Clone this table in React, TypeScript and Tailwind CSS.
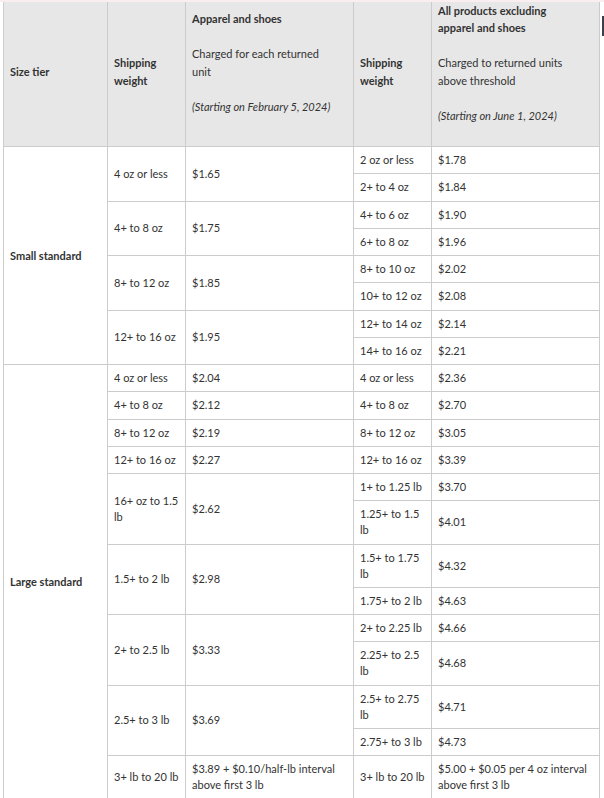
import React from 'react';

type Cell = { text: string; span?: number };
type Row = { left?: [Cell, Cell]; right: [string, string] };

const small: Row[] = [
  { left: [{ text: '4 oz or less', span: 2 }, { text: '$1.65', span: 2 }], right: ['2 oz or less', '$1.78'] },
  { right: ['2+ to 4 oz', '$1.84'] },
  { left: [{ text: '4+ to 8 oz', span: 2 }, { text: '$1.75', span: 2 }], right: ['4+ to 6 oz', '$1.90'] },
  { right: ['6+ to 8 oz', '$1.96'] },
  { left: [{ text: '8+ to 12 oz', span: 2 }, { text: '$1.85', span: 2 }], right: ['8+ to 10 oz', '$2.02'] },
  { right: ['10+ to 12 oz', '$2.08'] },
  { left: [{ text: '12+ to 16 oz', span: 2 }, { text: '$1.95', span: 2 }], right: ['12+ to 14 oz', '$2.14'] },
  { right: ['14+ to 16 oz', '$2.21'] },
];

const large: Row[] = [
  { left: [{ text: '4 oz or less' }, { text: '$2.04' }], right: ['4 oz or less', '$2.36'] },
  { left: [{ text: '4+ to 8 oz' }, { text: '$2.12' }], right: ['4+ to 8 oz', '$2.70'] },
  { left: [{ text: '8+ to 12 oz' }, { text: '$2.19' }], right: ['8+ to 12 oz', '$3.05'] },
  { left: [{ text: '12+ to 16 oz' }, { text: '$2.27' }], right: ['12+ to 16 oz', '$3.39'] },
  { left: [{ text: '16+ oz to 1.5\nlb', span: 2 }, { text: '$2.62', span: 2 }], right: ['1+ to 1.25 lb', '$3.70'] },
  { right: ['1.25+ to 1.5\nlb', '$4.01'] },
  { left: [{ text: '1.5+ to 2 lb', span: 2 }, { text: '$2.98', span: 2 }], right: ['1.5+ to 1.75\nlb', '$4.32'] },
  { right: ['1.75+ to 2 lb', '$4.63'] },
  { left: [{ text: '2+ to 2.5 lb', span: 2 }, { text: '$3.33', span: 2 }], right: ['2+ to 2.25 lb', '$4.66'] },
  { right: ['2.25+ to 2.5\nlb', '$4.68'] },
  { left: [{ text: '2.5+ to 3 lb', span: 2 }, { text: '$3.69', span: 2 }], right: ['2.5+ to 2.75\nlb', '$4.71'] },
  { right: ['2.75+ to 3 lb', '$4.73'] },
  {
    left: [{ text: '3+ lb to 20 lb' }, { text: '$3.89 + $0.10/half-lb interval above first 3 lb' }],
    right: ['3+ lb to 20 lb', '$5.00 + $0.05 per 4 oz interval above first 3 lb'],
  },
];

const td = 'border border-[#cccccc] px-[6px] py-[5.125px] align-middle leading-[16px]';
const th = 'border border-[#cccccc] bg-[#e7e7e7] px-[6px] py-[4.5px] align-middle text-left leading-[17.5px]';

function Section({ tier, rows }: { tier: string; rows: Row[] }) {
  return (
    <>
      {rows.map((r, i) => (
        <tr key={i}>
          {i === 0 && (
            <td rowSpan={rows.length} className={`${td} font-bold`}>
              {tier}
            </td>
          )}
          {r.left && (
            <>
              <td rowSpan={r.left[0].span ?? 1} className={`${td} whitespace-pre`}>
                {r.left[0].text}
              </td>
              <td rowSpan={r.left[1].span ?? 1} className={td}>
                {r.left[1].text}
              </td>
            </>
          )}
          <td className={`${td} whitespace-pre`}>{r.right[0]}</td>
          <td className={td}>{r.right[1]}</td>
        </tr>
      ))}
    </>
  );
}

export default function App() {
  return (
    <div className="relative h-[798px] w-[604px] overflow-hidden bg-white text-[11px] text-[#333333] [font-family:Lato,'Liberation_Sans',sans-serif]">
      <div className="h-[2px] bg-[#fbeef1]" />
      <div className="ml-[3px] overflow-hidden">
        <table className="-mt-[6px] w-[596px] table-fixed border-collapse">
          <colgroup>
            <col className="w-[104px]" />
            <col className="w-[78px]" />
            <col className="w-[168px]" />
            <col className="w-[78px]" />
            <col className="w-[168px]" />
          </colgroup>
          <thead>
            <tr>
              <th className={`${th} font-bold`}>Size tier</th>
              <th className={`${th} font-bold leading-[16px]`}>
                Shipping
                <br />
                weight
              </th>
              <th className={`${th} font-normal`}>
                <p className="mb-[17.5px] font-bold">Apparel and shoes</p>
                <p className="mb-[17.5px]">
                  Charged for each returned
                  <br />
                  unit
                </p>
                <p className="mb-[17.5px] italic">(Starting on February 5, 2024)</p>
              </th>
              <th className={`${th} font-bold leading-[16px]`}>
                Shipping
                <br />
                weight
              </th>
              <th className={`${th} font-normal`}>
                <p className="font-bold">
                  All products excluding
                  <br />
                  apparel and shoes
                </p>
                <p className="mb-[17.5px] mt-[17.5px]">
                  Charged to returned units
                  <br />
                  above threshold
                </p>
                <p className="mb-[17.5px] italic">(Starting on June 1, 2024)</p>
              </th>
            </tr>
          </thead>
          <tbody>
            <Section tier="Small standard" rows={small} />
            <Section tier="Large standard" rows={large} />
          </tbody>
        </table>
      </div>
      <div className="absolute right-0 top-[16px] h-[20px] w-[2.5px] bg-[#3b404b]" />
    </div>
  );
}
